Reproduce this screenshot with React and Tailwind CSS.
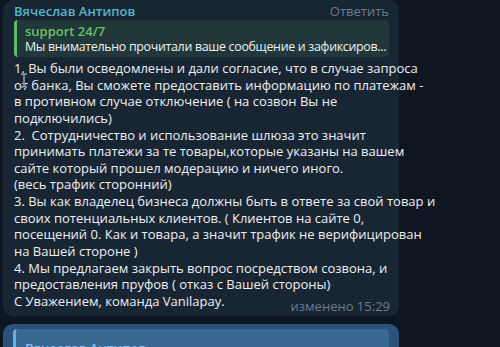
import React from "react";

const lines = [
  "1. Вы были осведомлены и дали согласие, что в случае запроса",
  "от банка, Вы сможете предоставить информацию по платежам -",
  "в противном случае отключение ( на созвон Вы не",
  "подключились)",
  "2.  Сотрудничество и использование шлюза это значит",
  "принимать платежи за те товары,которые указаны на вашем",
  "сайте который прошел модерацию и ничего иного.",
  "(весь трафик сторонний)",
  "3. Вы как владелец бизнеса должны быть в ответе за свой товар и",
  "своих потенциальных клиентов. ( Клиентов на сайте 0,",
  "посещений 0. Как и товара, а значит трафик не верифицирован",
  "на Вашей стороне )",
  "4. Мы предлагаем закрыть вопрос посредством созвона, и",
  "предоставления пруфов ( отказ с Вашей стороны)",
];

export default function App() {
  return (
    <div
      className="w-[500px] h-[347px] overflow-hidden bg-[#0e1621] flex flex-col gap-[8px] pl-[3px] relative"
      style={{ fontFamily: '"Open Sans", "Noto Sans", sans-serif' }}
    >
      <div className="w-[396px] shrink-0 rounded-[10px] bg-[#182533] pl-[11px] pr-[10px] pt-[3px] pb-[6px] text-[13px] text-[#eef0f2]">
        <div className="flex justify-between leading-[16px]">
          <span className="font-semibold text-[#55b6c9]">Вячеслав Антипов</span>
          <span className="text-[#6c7c8c]">Ответить</span>
        </div>
        <div className="mt-[1px] h-[37px] rounded-[4px] bg-[#223739] border-l-[3px] border-[#5fba62] pl-[8px] pt-[3px] leading-[16px] whitespace-nowrap overflow-hidden">
          <div className="font-semibold text-[#66c266]">support 24/7</div>
          <div className="text-[12.4px] tracking-[-0.3px]">Мы внимательно прочитали ваше сообщение и зафиксиров...</div>
        </div>
        <div className="mt-[3px] leading-[16.64px] whitespace-pre">
          {lines.map((l, i) => (
            <div key={i}>{l}</div>
          ))}
          <div className="flex justify-between items-end">
            <span>С Уважением, команда Vanilapay.</span>
            <span className="text-[#6c7c8c] translate-y-[5px] translate-x-[1px]">изменено 15:29</span>
          </div>
        </div>
      </div>
      <div className="w-[396px] h-[60px] shrink-0 rounded-[10px] bg-[#2b5278] pl-[10px] pr-[10px] pt-[5px] text-[13px]">
        <div className="h-[40px] rounded-[4px] bg-[#386794] border-l-[3px] border-[#6aaee8] pl-[9px] pt-[11px] leading-[16px]">
          <span className="font-semibold text-[#86c0ec]">Вячеслав Антипов</span>
        </div>
      </div>
      <svg
        className="absolute left-[20px] top-[73px]"
        width="8"
        height="15"
        viewBox="0 0 8 15"
      >
        <path d="M1 1h2.5l0.5 0.5 0.5-0.5H7M4 1.5v12M1 14h2.5l0.5-0.5 0.5 0.5H7" stroke="#0e1621" strokeWidth="2.2" fill="none" />
        <path d="M1 1h2.5l0.5 0.5 0.5-0.5H7M4 1.5v12M1 14h2.5l0.5-0.5 0.5 0.5H7" stroke="#f2f2f2" strokeWidth="1" fill="none" />
      </svg>
    </div>
  );
}
